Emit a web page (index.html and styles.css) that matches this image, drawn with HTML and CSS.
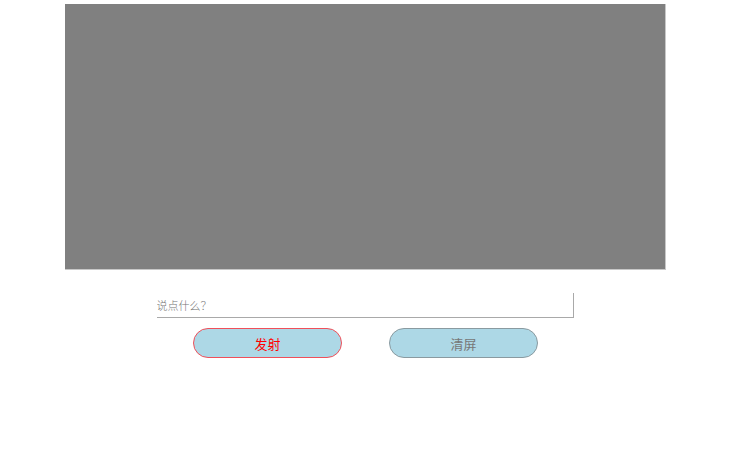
FILE: index.html
```html
<!DOCTYPE html>
<html lang="zh">
<head>
<meta charset="utf-8">
<title>弹幕</title>
<link rel="stylesheet" href="styles.css">
</head>
<body>
<div class="page">
  <div class="screen"></div>
  <input class="say" type="text" placeholder="说点什么？">
  <div class="actions">
    <button class="btn fire">发射</button>
    <button class="btn clear">清屏</button>
  </div>
</div>
</body>
</html>
```
FILE: styles.css
```css
html, body {
  margin: 0;
  padding: 0;
  background: #fff;
}
.page {
  display: flex;
  flex-direction: column;
  align-items: center;
  padding-top: 4px;
  font-family: "Noto Sans CJK SC", "Noto Sans", sans-serif;
}
.screen {
  width: 600px;
  height: 265px;
  background: #808080;
  border-right: 1px solid #c8c8c8;
  border-bottom: 1px solid #c8c8c8;
  margin-left: 1px;
}
.say {
  margin-top: 23px;
  width: 416px;
  height: 24px;
  box-sizing: content-box;
  padding: 0;
  border: none;
  border-right: 1px solid #a9a9a9;
  border-bottom: 1px solid #a9a9a9;
  outline: none;
  font-family: "Noto Sans CJK SC", sans-serif;
  font-size: 11px;
  font-weight: 300;
  color: #333;
}
.say::placeholder {
  color: #757575;
}
.actions {
  display: flex;
  gap: 47px;
  margin-top: 10px;
  margin-left: 1px;
}
.btn {
  width: 149px;
  height: 30px;
  border-radius: 15px;
  background: #add8e6;
  font-family: "Noto Sans CJK SC", sans-serif;
  font-size: 13px;
  padding: 0;
  cursor: pointer;
}
.fire {
  border: 1px solid #f0505a;
  color: #ff0000;
}
.clear {
  border: 1px solid #8a9aa0;
  color: #777;
}
```
